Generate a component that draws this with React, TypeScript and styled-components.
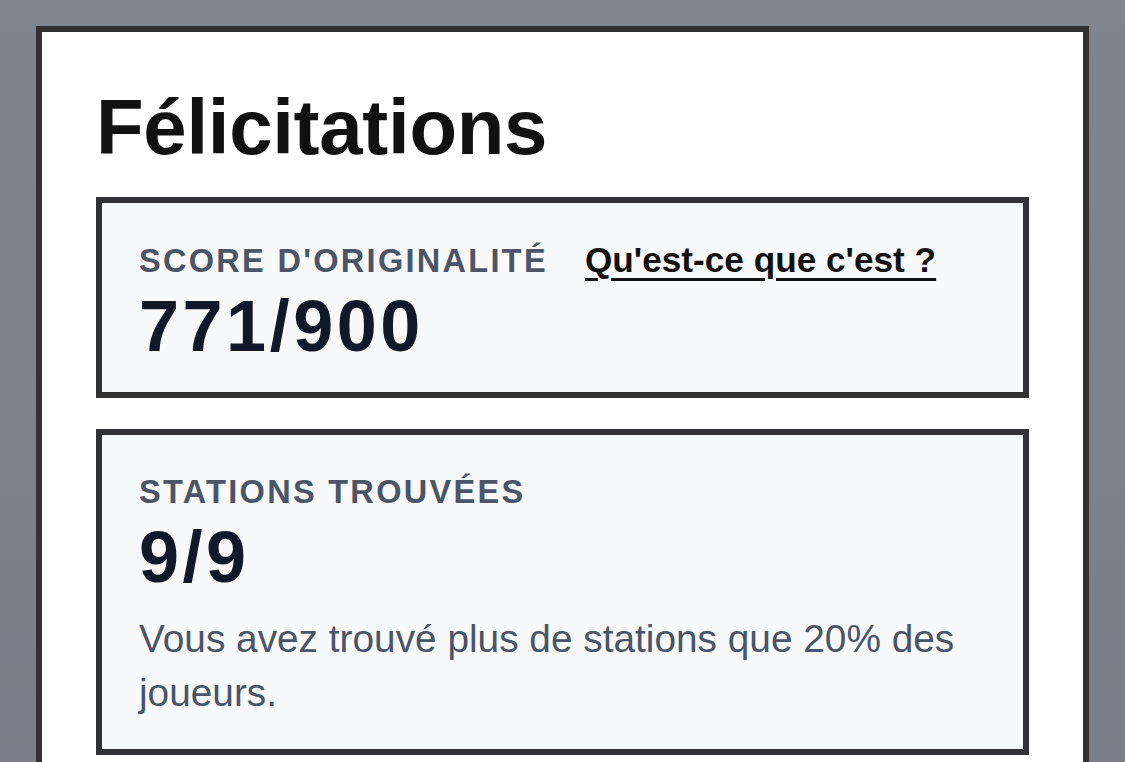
import styled, { createGlobalStyle } from "styled-components";

const GlobalStyle = createGlobalStyle`
    html, body {
        margin: 0;
        padding: 0;
        background-color: #7b808b;
        font-family: "Liberation Sans", Arial, sans-serif;
    }
`;

const Overlay = styled.div`
    min-height: 100vh;
    padding: 26px 36px 0;
    background: linear-gradient(180deg, #80858f 0%, #787d89 100%);
    box-sizing: border-box;
`;

const Card = styled.section`
    background-color: #ffffff;
    border: 6px solid #313133;
    padding: 49px 54px 80px;
`;

const Title = styled.h1`
    margin: 0 0 22px;
    font-size: 78px;
    line-height: 93.6px;
    font-weight: 700;
    letter-spacing: -0.3px;
    color: #111111;
`;

const StatBox = styled.div<{ $bottom: number }>`
    background-color: #f7f9fb;
    border: 6px solid #313133;
    padding: 37px 40px ${(p) => p.$bottom}px 37px;

    & + & {
        margin-top: 31px;
    }
`;

const LabelRow = styled.div`
    display: flex;
    align-items: baseline;
    gap: 37px;
`;

const Label = styled.span`
    font-size: 32.5px;
    line-height: 40px;
    font-weight: 700;
    letter-spacing: 2.3px;
    text-transform: uppercase;
    color: #4a5568;
`;

const HelpLink = styled.a`
    font-size: 35.2px;
    line-height: 40px;
    font-weight: 700;
    color: #111111;
    text-decoration: underline;
    text-decoration-thickness: 3px;
    text-underline-offset: 6px;
    cursor: pointer;
`;

const Value = styled.div`
    margin-top: 6px;
    font-size: 72px;
    line-height: 79px;
    font-weight: 700;
    letter-spacing: 3.5px;
    color: #111827;
`;

const Note = styled.p`
    margin: 15px 0 0;
    font-size: 38.8px;
    line-height: 54px;
    color: #4a5568;
`;

export default function App() {
    return (
        <>
            <GlobalStyle />
            <Overlay>
                <Card>
                    <Title>Félicitations</Title>

                    <StatBox $bottom={26}>
                        <LabelRow>
                            <Label>Score d'originalité</Label>
                            <HelpLink>Qu'est-ce que c'est&nbsp;?</HelpLink>
                        </LabelRow>
                        <Value>771/900</Value>
                    </StatBox>

                    <StatBox $bottom={29}>
                        <LabelRow>
                            <Label>Stations trouvées</Label>
                        </LabelRow>
                        <Value>9/9</Value>
                        <Note>Vous avez trouvé plus de stations que 20% des joueurs.</Note>
                    </StatBox>
                </Card>
            </Overlay>
        </>
    );
}
